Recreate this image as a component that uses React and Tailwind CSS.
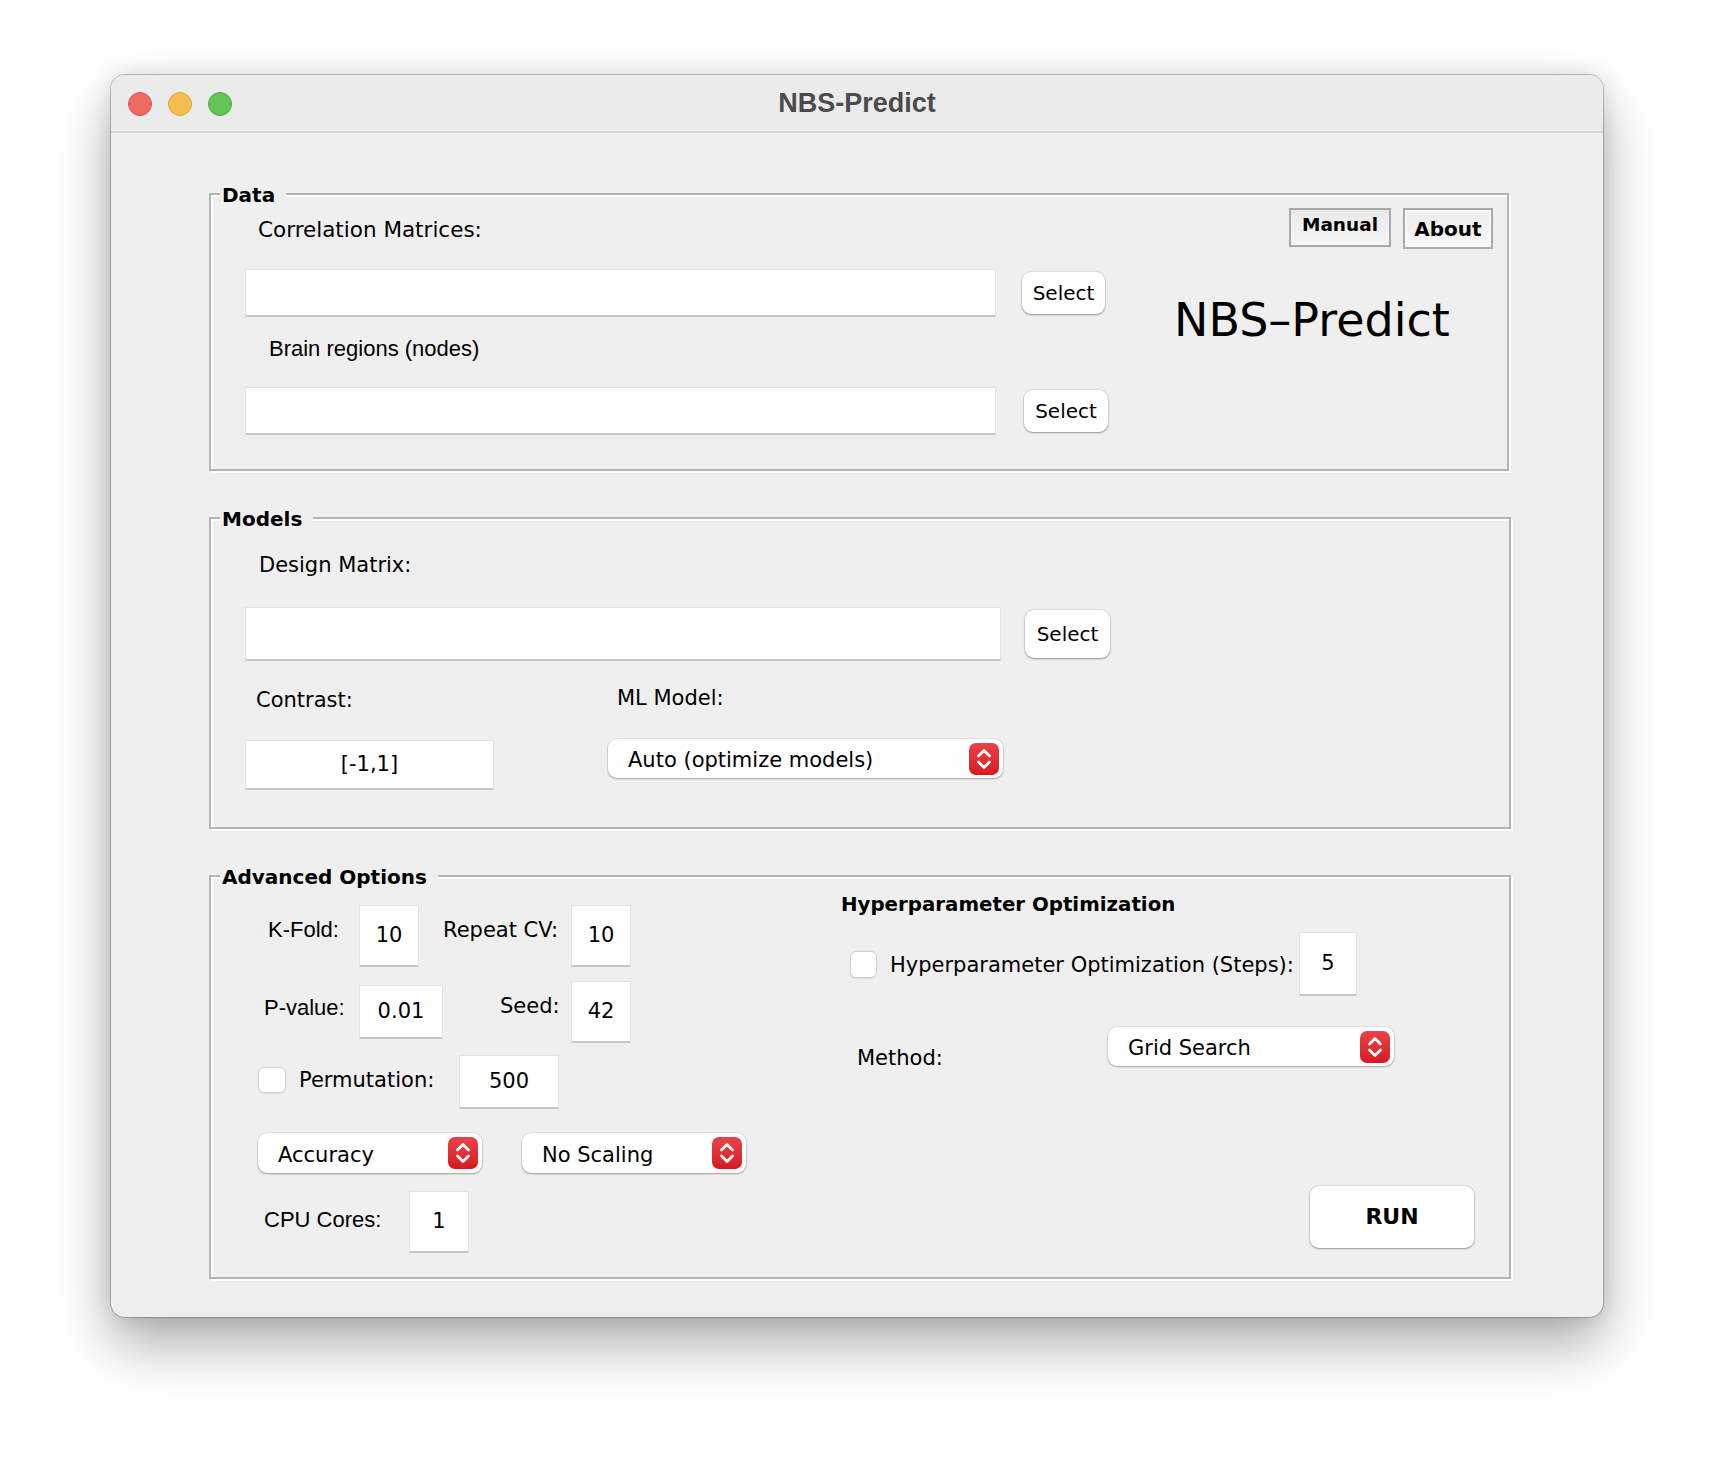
import React from 'react'

const lucida = "font-['DejaVu_Sans',sans-serif]"
const helv = "font-['Liberation_Sans',Arial,sans-serif]"

function GroupBox({ title, width, height, children }) {
    return (
        <div
            className={`relative border-2 border-[#b4b4b4] shadow-[inset_2px_2px_0_#fff,2px_2px_0_#fff] ${width} ${height}`}
        >
            <div
                className={`absolute top-[-14px] left-[9px] h-[28px] flex items-center bg-[#efefef] pl-[2px] pr-[11px] text-[20px] font-bold text-black leading-none ${lucida}`}
            >
                {title}
            </div>
            {children}
        </div>
    )
}

function Field({ className, value }) {
    return (
        <div
            className={`bg-white border border-[#e3e3e3] border-b-2 border-b-[#c6c6c6] flex items-center justify-center text-[21px] text-black leading-none ${lucida} ${className}`}
        >
            {value}
        </div>
    )
}

function PushButton({ className, children }) {
    return (
        <button
            className={`bg-white rounded-[9px] shadow-[0_1px_2px_rgba(0,0,0,0.35),0_0_0_1px_rgba(0,0,0,0.06)] flex items-center justify-center text-black leading-none ${lucida} ${className}`}
        >
            {children}
        </button>
    )
}

function Stepper() {
    return (
        <div className="w-[30px] h-[32px] rounded-[7px] bg-gradient-to-b from-[#ea424b] to-[#d7161f] flex items-center justify-center">
            <svg width="30" height="32" viewBox="0 0 30 32" fill="none">
                <path d="M9.5 13 L15 7.5 L20.5 13" stroke="#fff" strokeWidth="2.8" strokeLinecap="round" strokeLinejoin="round" />
                <path d="M9.5 19 L15 24.5 L20.5 19" stroke="#fff" strokeWidth="2.8" strokeLinecap="round" strokeLinejoin="round" />
            </svg>
        </div>
    )
}

function Dropdown({ className, label }) {
    return (
        <div
            className={`bg-white rounded-[9px] shadow-[0_1px_2px_rgba(0,0,0,0.3),0_0_0_1px_rgba(0,0,0,0.05)] flex items-center justify-between pl-[20px] pr-[4px] text-[21px] text-black leading-none ${lucida} ${className}`}
        >
            <span className="pt-[4px]">{label}</span>
            <Stepper />
        </div>
    )
}

function CheckBox({ className }) {
    return (
        <div
            className={`bg-white rounded-[6px] border border-[#cfcfcf] shadow-[0_1px_1px_rgba(0,0,0,0.08)] shrink-0 ${className}`}
        />
    )
}

export default function App() {
    return (
        <div className="min-h-[1466px] bg-white pl-[111px] pt-[75px]">
            <div className="w-[1492px] h-[1242px] rounded-[14px] overflow-hidden bg-[#efefef] shadow-[0_28px_55px_rgba(0,0,0,0.32),0_0_22px_rgba(0,0,0,0.12),0_0_0_1px_rgba(0,0,0,0.22)]">
                {/* title bar */}
                <div className="relative h-[58px] bg-[#ebebeb] border-b-2 border-[#d5d5d5] flex items-center">
                    <div className="flex items-center gap-[16px] pl-[17px] pt-[1px]">
                        <span className="w-[24px] h-[24px] rounded-full bg-[#ee6a5f] border border-[#d65b4f]" />
                        <span className="w-[24px] h-[24px] rounded-full bg-[#f5be4f] border border-[#d9a53e]" />
                        <span className="w-[24px] h-[24px] rounded-full bg-[#62c554] border border-[#51a845]" />
                    </div>
                    <div
                        className={`absolute inset-0 flex items-center justify-center text-[27px] font-bold text-[#4b4b4b] ${helv}`}
                    >
                        NBS-Predict
                    </div>
                </div>

                <div className="pl-[98px] pt-[60px] flex flex-col">
                    {/* Data */}
                    <GroupBox title="Data" width="w-[1300px]" height="h-[278px]">
                        <div className="flex">
                            <div className="w-[903px] flex flex-col">
                                <div className={`mt-[21px] ml-[47px] h-[28px] flex items-center text-[21.5px] leading-none ${lucida}`}>
                                    Correlation Matrices:
                                </div>
                                <div className="mt-[25px] flex items-start">
                                    <Field className="ml-[34px] w-[751px] h-[48px]" />
                                    <PushButton className="ml-[26px] mt-[3px] w-[83px] h-[42px] text-[20px]">Select</PushButton>
                                </div>
                                <div className={`mt-[18px] ml-[58px] h-[28px] flex items-center text-[22px] leading-none ${helv}`}>
                                    Brain regions (nodes)
                                </div>
                                <div className="mt-[24px] flex items-start">
                                    <Field className="ml-[34px] w-[751px] h-[48px]" />
                                    <PushButton className="ml-[28px] mt-[3px] w-[84px] h-[42px] text-[20px]">Select</PushButton>
                                </div>
                            </div>
                            <div className="flex-1 flex flex-col">
                                <div className="mt-[13px] pr-[14px] flex justify-end items-start gap-[12px]">
                                    <button className={`w-[102px] h-[39px] border-2 border-[#aaaaaa] bg-gradient-to-b from-[#e9e9e9] to-[#f6f6f6] flex items-start justify-center pt-[6px] text-[18.5px] font-bold leading-none ${lucida}`}>
                                        Manual
                                    </button>
                                    <button className={`w-[90px] h-[41px] border-2 border-[#aaaaaa] shadow-[inset_0_0_0_2px_#fafafa] bg-gradient-to-b from-[#ececec] to-[#f7f7f7] flex items-center justify-center text-[20px] font-bold leading-none ${lucida}`}>
                                        About
                                    </button>
                                </div>
                                <div className={`mt-[48px] ml-[60px] text-[46px] leading-none text-black ${lucida}`}>
                                    NBS–Predict
                                </div>
                            </div>
                        </div>
                    </GroupBox>

                    {/* Models */}
                    <div className="mt-[46px]">
                        <GroupBox title="Models" width="w-[1302px]" height="h-[312px]">
                            <div className="flex flex-col">
                                <div className={`mt-[32px] ml-[48px] h-[28px] flex items-center text-[21px] leading-none ${lucida}`}>
                                    Design Matrix:
                                </div>
                                <div className="mt-[28px] flex items-start">
                                    <Field className="ml-[34px] w-[756px] h-[54px]" />
                                    <PushButton className="ml-[24px] mt-[3px] w-[85px] h-[48px] text-[20px]">Select</PushButton>
                                </div>
                                <div className={`mt-[25px] flex h-[28px] text-[21px] leading-none ${lucida}`}>
                                    <div className="ml-[45px] w-[361px] flex items-center">Contrast:</div>
                                    <div className="flex items-center -mt-[3px]">ML Model:</div>
                                </div>
                                <div className="mt-[25px] flex items-start">
                                    <Field className="ml-[34px] mt-[1px] w-[249px] h-[50px]" value="[-1,1]" />
                                    <Dropdown className="ml-[114px] w-[395px] h-[39px]" label="Auto (optimize models)" />
                                </div>
                            </div>
                        </GroupBox>
                    </div>

                    {/* Advanced Options */}
                    <div className="mt-[46px]">
                        <GroupBox title="Advanced Options" width="w-[1302px]" height="h-[404px]">
                            <div className="flex">
                                <div className="w-[620px] flex flex-col">
                                    <div className="mt-[28px] flex items-start">
                                        <div className={`ml-[57px] w-[91px] h-[50px] flex items-center text-[22px] leading-none ${helv}`}>K-Fold:</div>
                                        <Field className="w-[60px] h-[62px]" value="10" />
                                        <div className={`ml-[24px] w-[128px] h-[50px] flex items-center text-[21px] leading-none ${lucida}`}>Repeat CV:</div>
                                        <Field className="w-[60px] h-[62px]" value="10" />
                                    </div>
                                    <div className="mt-[14px] flex items-start">
                                        <div className={`ml-[53px] w-[95px] h-[54px] flex items-center text-[22px] leading-none ${helv}`}>P-value:</div>
                                        <Field className="mt-[4px] w-[84px] h-[54px]" value="0.01" />
                                        <div className={`ml-[57px] w-[71px] h-[50px] flex items-center text-[21px] leading-none ${lucida}`}>Seed:</div>
                                        <Field className="w-[60px] h-[62px]" value="42" />
                                    </div>
                                    <div className="mt-[12px] flex items-start">
                                        <CheckBox className="ml-[47px] mt-[12px] w-[28px] h-[26px]" />
                                        <div className={`ml-[13px] w-[160px] h-[50px] flex items-center text-[21px] leading-none ${lucida}`}>Permutation:</div>
                                        <Field className="w-[100px] h-[54px]" value="500" />
                                    </div>
                                    <div className="mt-[24px] flex items-start">
                                        <Dropdown className="ml-[47px] w-[224px] h-[40px]" label="Accuracy" />
                                        <Dropdown className="ml-[40px] w-[224px] h-[40px]" label="No Scaling" />
                                    </div>
                                    <div className="mt-[18px] flex items-start">
                                        <div className={`ml-[53px] w-[145px] h-[58px] flex items-center text-[22px] leading-none ${helv}`}>CPU Cores:</div>
                                        <Field className="w-[60px] h-[62px]" value="1" />
                                    </div>
                                </div>
                                <div className="flex-1 flex flex-col">
                                    <div className={`mt-[14px] ml-[10px] h-[28px] flex items-center text-[19.8px] font-bold leading-none ${lucida}`}>
                                        Hyperparameter Optimization
                                    </div>
                                    <div className="mt-[13px] flex items-start">
                                        <CheckBox className="ml-[19px] mt-[19px] w-[27px] h-[27px]" />
                                        <div className={`ml-[13px] w-[413px] h-[64px] pt-[3px] flex items-center text-[21px] leading-none ${lucida}`}>
                                            Hyperparameter Optimization (Steps):
                                        </div>
                                        <Field className="w-[58px] h-[64px] -ml-[4px]" value="5" />
                                    </div>
                                    <div className="mt-[31px] flex items-start">
                                        <div className={`ml-[26px] w-[251px] h-[62px] flex items-center text-[21px] leading-none ${lucida}`}>Method:</div>
                                        <Dropdown className="w-[286px] h-[39px]" label="Grid Search" />
                                    </div>
                                    <div className="mt-[97px] ml-[479px]">
                                        <PushButton className="w-[164px] h-[62px] text-[22px] font-bold">RUN</PushButton>
                                    </div>
                                </div>
                            </div>
                        </GroupBox>
                    </div>
                </div>
            </div>
        </div>
    )
}
